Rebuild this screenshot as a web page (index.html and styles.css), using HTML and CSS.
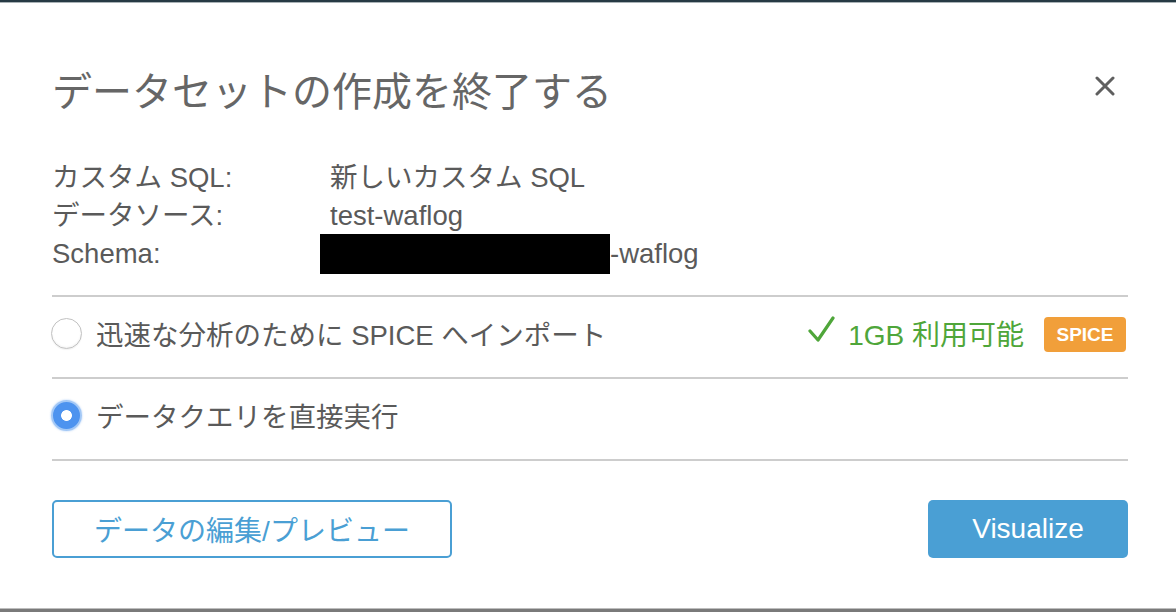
FILE: index.html
```html
<!DOCTYPE html>
<html lang="ja">
<head>
<meta charset="utf-8">
<link rel="stylesheet" href="styles.css">
</head>
<body>
<div class="topbar"></div>
<div class="modal">
  <div class="header">
    <h1 class="title">データセットの作成を終了する</h1>
    <span class="close" aria-label="close">
      <svg width="20" height="20" viewBox="0 0 20 20"><path d="M2 2 L18 18 M18 2 L2 18" stroke="#5f5f5f" stroke-width="3" stroke-linecap="round"/></svg>
    </span>
  </div>
  <div class="info">
    <div class="row"><span class="label">カスタム SQL:</span><span class="value">新しいカスタム SQL</span></div>
    <div class="row"><span class="label">データソース:</span><span class="value">test-waflog</span></div>
    <div class="row"><span class="label">Schema:</span><span class="value schema"><span class="redact"></span>-waflog</span></div>
  </div>
  <div class="option first">
    <span class="radio"></span>
    <span class="opt-text">迅速な分析のために SPICE へインポート</span>
    <span class="avail">
      <svg class="check" width="28" height="28" viewBox="0 0 28 28"><path d="M2 15 L10 24 L25 2" fill="none" stroke="#4fa63a" stroke-width="3.2" stroke-linecap="round" stroke-linejoin="round"/></svg>
      <span class="avail-text">1GB 利用可能</span>
      <span class="badge">SPICE</span>
    </span>
  </div>
  <div class="option">
    <span class="radio checked"></span>
    <span class="opt-text">データクエリを直接実行</span>
  </div>
  <div class="actions">
    <button class="btn outline">データの編集/プレビュー</button>
    <button class="btn primary">Visualize</button>
  </div>
</div>
<div class="bottombar"></div>
</body>
</html>
```
FILE: styles.css
```css
* { box-sizing: border-box; }
html, body { margin: 0; padding: 0; background: #fff; }
body {
  width: 1176px;
  height: 612px;
  overflow: hidden;
  display: flex;
  flex-direction: column;
  font-family: "Liberation Sans", "Noto Sans CJK JP", sans-serif;
  color: #5a5a5a;
}
.topbar {
  height: 3px;
  background: #263a44;
  border-bottom: 1px solid #a9b2b6;
  flex: none;
}
.modal {
  flex: 1;
  padding: 62px 48px 0 52px;
}
.header {
  display: flex;
  align-items: center;
  justify-content: space-between;
  height: 48px;
}
.title {
  margin: 0;
  font-weight: normal;
  font-size: 40px;
  line-height: 48px;
  color: #666;
  font-family: "Noto Sans CJK JP", sans-serif;
}
.close {
  display: flex;
  margin-right: 13px;
  margin-top: -7px;
}
.info {
  margin-top: 46px;
  padding-bottom: 22px;
  border-bottom: 2px solid #cdcdcd;
}
.row {
  display: flex;
  font-size: 27.5px;
  line-height: 38px;
  height: 38px;
}
.label { width: 278px; flex: none; }
.schema { display: flex; align-items: center; margin-left: -10px; }
.redact {
  display: inline-block;
  width: 290px;
  height: 40px;
  background: #000;
}
.option {
  display: flex;
  align-items: center;
  height: 82px;
  padding-bottom: 8px;
  border-bottom: 2px solid #cdcdcd;
  font-size: 27.5px;
}
.radio {
  width: 31px;
  height: 31px;
  border-radius: 50%;
  border: 1.5px solid #c2c2c2;
  background: #fff;
  box-shadow: inset 0 -1px 2px rgba(0,0,0,0.06), 0 1px 1px rgba(0,0,0,0.05);
  margin-left: -1px;
  margin-right: 14px;
  flex: none;
}
.radio.checked {
  border: 2.5px solid #a3c8f6;
  background: radial-gradient(circle, #fff 0 5px, #4d93ef 5.8px);
  box-shadow: 0 0 2px rgba(77,147,239,0.5);
}
.opt-text { flex: 1; }
.avail {
  display: flex;
  align-items: center;
  color: #4fa63a;
}
.check { margin-right: 12px; margin-top: -6px; }
.avail-text { margin-right: 20px; font-size: 28px; }
.badge {
  display: inline-block;
  width: 82px;
  height: 35px;
  line-height: 35px;
  text-align: center;
  background: #f19f3a;
  color: #fff;
  border-radius: 4px;
  font-weight: bold;
  font-size: 19px;
  margin-right: 2px;
  margin-top: 3px;
}
.actions {
  display: flex;
  justify-content: space-between;
  margin-top: 39px;
}
.btn {
  height: 58px;
  border-radius: 5px;
  font-size: 28px;
  font-family: "Liberation Sans", "Noto Sans CJK JP", sans-serif;
  cursor: pointer;
}
.btn.outline {
  width: 400px;
  background: #fff;
  border: 2px solid #4a9fd4;
  color: #4a9fd4;
}
.btn.primary {
  width: 200px;
  background: #4a9fd4;
  border: none;
  color: #fff;
}
.bottombar {
  height: 4px;
  flex: none;
  background: #7a7a7a;
  border-top: 1px solid #bdbdbd;
}
```
